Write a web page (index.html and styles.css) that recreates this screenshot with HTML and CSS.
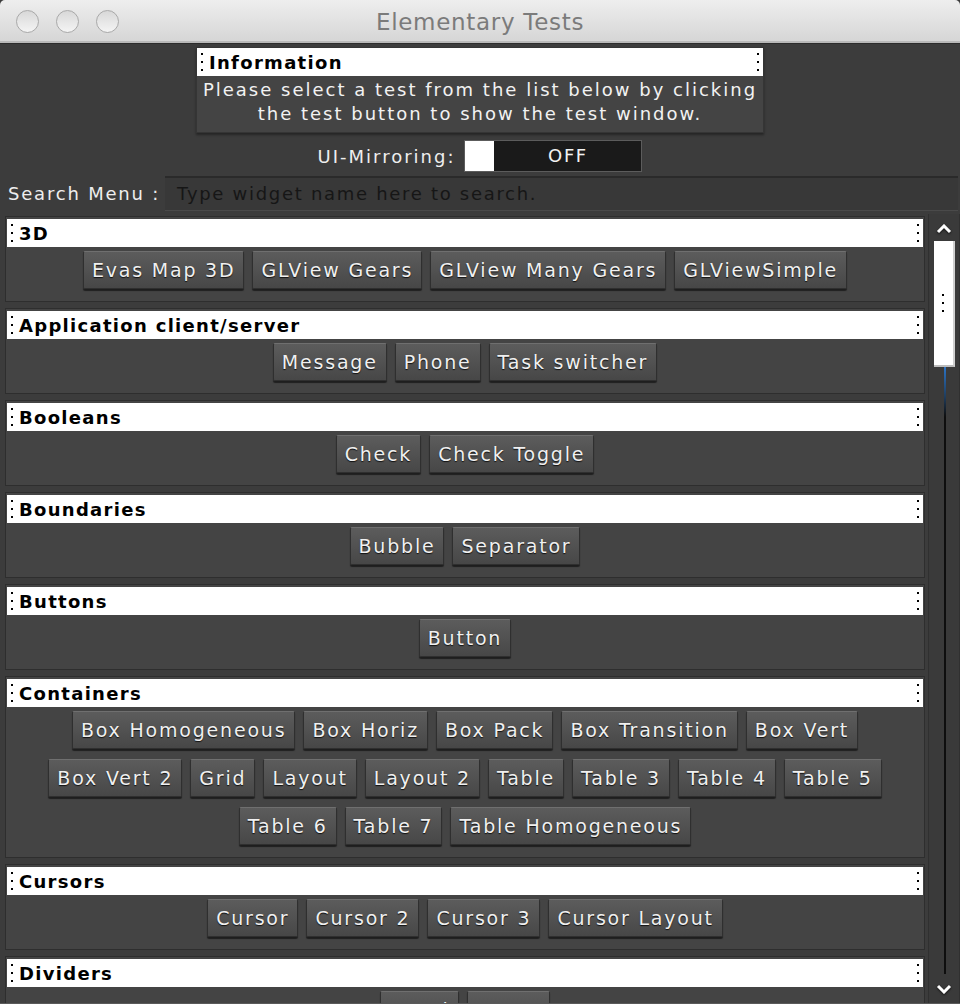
FILE: index.html
```html
<!DOCTYPE html>
<html lang="en">
<head>
  <meta charset="UTF-8">
  <title>Elementary Tests</title>
  <link rel="stylesheet" href="styles.css">
</head>
<body>
  <div class="titlebar">
    <div class="lights"><span></span><span></span><span></span></div>
    <div class="title">Elementary Tests</div>
  </div>

  <main class="win">
    <section class="info">
      <header class="head"><span class="grip"></span>Information<span class="grip end"></span></header>
      <p>Please select a test from the list below by clicking<br>the test button to show the test window.</p>
    </section>

    <div class="mirror">
      <span>UI-Mirroring:</span>
      <div class="toggle"><span class="knob"></span><span class="state">OFF</span></div>
    </div>

    <div class="search">
      <label>Search Menu :</label>
      <div class="entry">Type widget name here to search.</div>
    </div>

    <div class="scroller">
      <div class="list">
        <section class="frame">
          <header class="head"><span class="grip"></span>3D<span class="grip end"></span></header>
          <div class="buttons">
            <button>Evas Map 3D</button><button>GLView Gears</button><button>GLView Many Gears</button><button>GLViewSimple</button>
          </div>
        </section>
        <section class="frame">
          <header class="head"><span class="grip"></span>Application client/server<span class="grip end"></span></header>
          <div class="buttons">
            <button>Message</button><button>Phone</button><button>Task switcher</button>
          </div>
        </section>
        <section class="frame">
          <header class="head"><span class="grip"></span>Booleans<span class="grip end"></span></header>
          <div class="buttons">
            <button>Check</button><button>Check Toggle</button>
          </div>
        </section>
        <section class="frame">
          <header class="head"><span class="grip"></span>Boundaries<span class="grip end"></span></header>
          <div class="buttons">
            <button>Bubble</button><button>Separator</button>
          </div>
        </section>
        <section class="frame">
          <header class="head"><span class="grip"></span>Buttons<span class="grip end"></span></header>
          <div class="buttons">
            <button>Button</button>
          </div>
        </section>
        <section class="frame">
          <header class="head"><span class="grip"></span>Containers<span class="grip end"></span></header>
          <div class="buttons">
            <button>Box Homogeneous</button><button>Box Horiz</button><button>Box Pack</button><button>Box Transition</button><button>Box Vert</button>
            <button>Box Vert 2</button><button>Grid</button><button>Layout</button><button>Layout 2</button><button>Table</button><button>Table 3</button><button>Table 4</button><button>Table 5</button>
            <button>Table 6</button><button>Table 7</button><button>Table Homogeneous</button>
          </div>
        </section>
        <section class="frame">
          <header class="head"><span class="grip"></span>Cursors<span class="grip end"></span></header>
          <div class="buttons">
            <button>Cursor</button><button>Cursor 2</button><button>Cursor 3</button><button>Cursor Layout</button>
          </div>
        </section>
        <section class="frame">
          <header class="head"><span class="grip"></span>Dividers<span class="grip end"></span></header>
          <div class="buttons">
            <button>Panel</button><button>Panes</button>
          </div>
        </section>
      </div>

      <div class="vbar">
        <svg class="arrow" width="16" height="10" viewBox="0 0 16 10"><polyline points="2,8 8,2 14,8" /></svg>
        <div class="thumb"><span class="grip"></span></div>
        <div class="track"></div>
        <svg class="arrow" width="16" height="10" viewBox="0 0 16 10"><polyline points="2,2 8,8 14,2" /></svg>
      </div>
    </div>
  </main>
</body>
</html>
```

FILE: styles.css
```css
body {
  margin: 0;
  width: 960px;
  height: 1004px;
  overflow: hidden;
  background: #3c3c3c;
  font-family: "DejaVu Sans", sans-serif;
}

/* window chrome */
.titlebar {
  height: 41px;
  border-bottom: 2px solid #b9b9b9;
  background: linear-gradient(#eeeeee, #d6d6d6);
  border-radius: 5px 5px 0 0;
  position: relative;
  display: flex;
  align-items: center;
  justify-content: center;
}

.lights {
  position: absolute;
  left: 16px;
  top: 10px;
  display: flex;
  gap: 17px;
}

.lights span {
  width: 21px;
  height: 21px;
  border-radius: 50%;
  border: 1px solid #a9a9a9;
  background: linear-gradient(#d8d8d8, #f4f4f4);
}

.title {
  font-size: 23px;
  letter-spacing: 0.7px;
  color: #7b7b7b;
  margin-top: 3px;
}

.win {
  border-top: 1px solid #2c2c2c;
  padding-top: 3px;
}

/* frame headers */
.head {
  height: 28px;
  background: #fff;
  color: #000;
  font-weight: bold;
  font-size: 18px;
  letter-spacing: 1.3px;
  display: flex;
  align-items: center;
  padding-left: 4px;
}

.grip {
  width: 2px;
  height: 20px;
  margin-right: 6px;
  background: linear-gradient(#000 0 2px, transparent 2px) 0 1px / 2px 8px repeat-y;
}

.grip.end {
  margin: 0 4px 0 auto;
}

.info {
  width: 566px;
  margin: 0 auto;
  background: #444;
  border: 1px solid #353535;
  box-shadow: 0 2px 2px #262626;
}

.info p {
  margin: 0;
  padding: 2px 0 6px;
  text-align: center;
  color: #f2f2f2;
  font-size: 18px;
  letter-spacing: 2px;
  line-height: 24px;
}

.mirror {
  display: flex;
  justify-content: center;
  align-items: center;
  gap: 9px;
  margin-top: 7px;
  color: #eee;
  font-size: 18px;
  letter-spacing: 2px;
}

.toggle {
  width: 178px;
  height: 32px;
  box-sizing: border-box;
  border: 1px solid #5c5c5c;
  background: #1a1a1a;
  display: flex;
  letter-spacing: 1.6px;
}

.knob {
  width: 29px;
  background: #fff;
}

.state {
  flex: 1;
  text-align: center;
  line-height: 30px;
  color: #f2f2f2;
}

.search {
  display: flex;
  align-items: center;
  margin-top: 4px;
  height: 35px;
}

.search label {
  padding-left: 8px;
  width: 157px;
  color: #eee;
  font-size: 18px;
  letter-spacing: 1.8px;
  white-space: nowrap;
}

.entry {
  flex: 1;
  height: 35px;
  box-sizing: border-box;
  margin-right: 2px;
  background: #383838;
  border-top: 2px solid #2a2a2a;
  border-bottom: 1px solid #4a4a4a;
  padding-left: 12px;
  line-height: 31px;
  color: #161616;
  font-size: 18px;
  letter-spacing: 1.7px;
}

/* test list */
.scroller {
  display: flex;
  margin-top: 3px;
  height: 789px;
  overflow: hidden;
  border-bottom: 3px solid #5a5a5a;
}

.list {
  width: 920px;
  padding: 2px 0 0 5px;
}

.frame {
  background: #444;
  border: 1px solid #2e2e2e;
  padding: 2px 1px;
  margin-bottom: 6px;
}

.buttons {
  display: flex;
  flex-wrap: wrap;
  justify-content: center;
  gap: 10px 8px;
  padding: 4px 40px 10px;
}

button {
  height: 38px;
  box-sizing: border-box;
  padding: 0 8px;
  font-family: "DejaVu Sans", sans-serif;
  font-size: 19px;
  letter-spacing: 1.8px;
  color: #f0f0f0;
  text-shadow: 0 1px 1px #111;
  background: linear-gradient(#5c5c5c, #474747);
  border: 1px solid #2f2f2f;
  border-top-color: #6f6f6f;
  border-radius: 2px;
  box-shadow: 0 2px 1px rgba(0, 0, 0, 0.55);
}

/* scrollbar */
.vbar {
  width: 30px;
  margin-left: 3px;
  background: #3a3a3a;
  border-left: 1px solid #303030;
  border-right: 1px solid #303030;
  display: flex;
  flex-direction: column;
  align-items: center;
}

.arrow {
  margin-top: 10px;
  filter: drop-shadow(0 1px 1px #111);
}

.arrow:last-child {
  margin: 0 0 9px;
}

.arrow polyline {
  fill: none;
  stroke: #fff;
  stroke-width: 3;
}

.thumb {
  width: 21px;
  height: 126px;
  box-sizing: border-box;
  margin-top: 7px;
  background: #fff;
  border-right: 2px solid #cfcfcf;
  border-bottom: 2px solid #bcbcbc;
  display: flex;
  align-items: center;
  justify-content: center;
}

.thumb .grip {
  margin: 0;
  height: 20px;
}

.track {
  flex: 1;
  width: 2px;
  margin: 0 0 10px 1px;
  background: linear-gradient(#2b73c4, #1f3c5c 30px, #0e0e0e 50px);
}
```
